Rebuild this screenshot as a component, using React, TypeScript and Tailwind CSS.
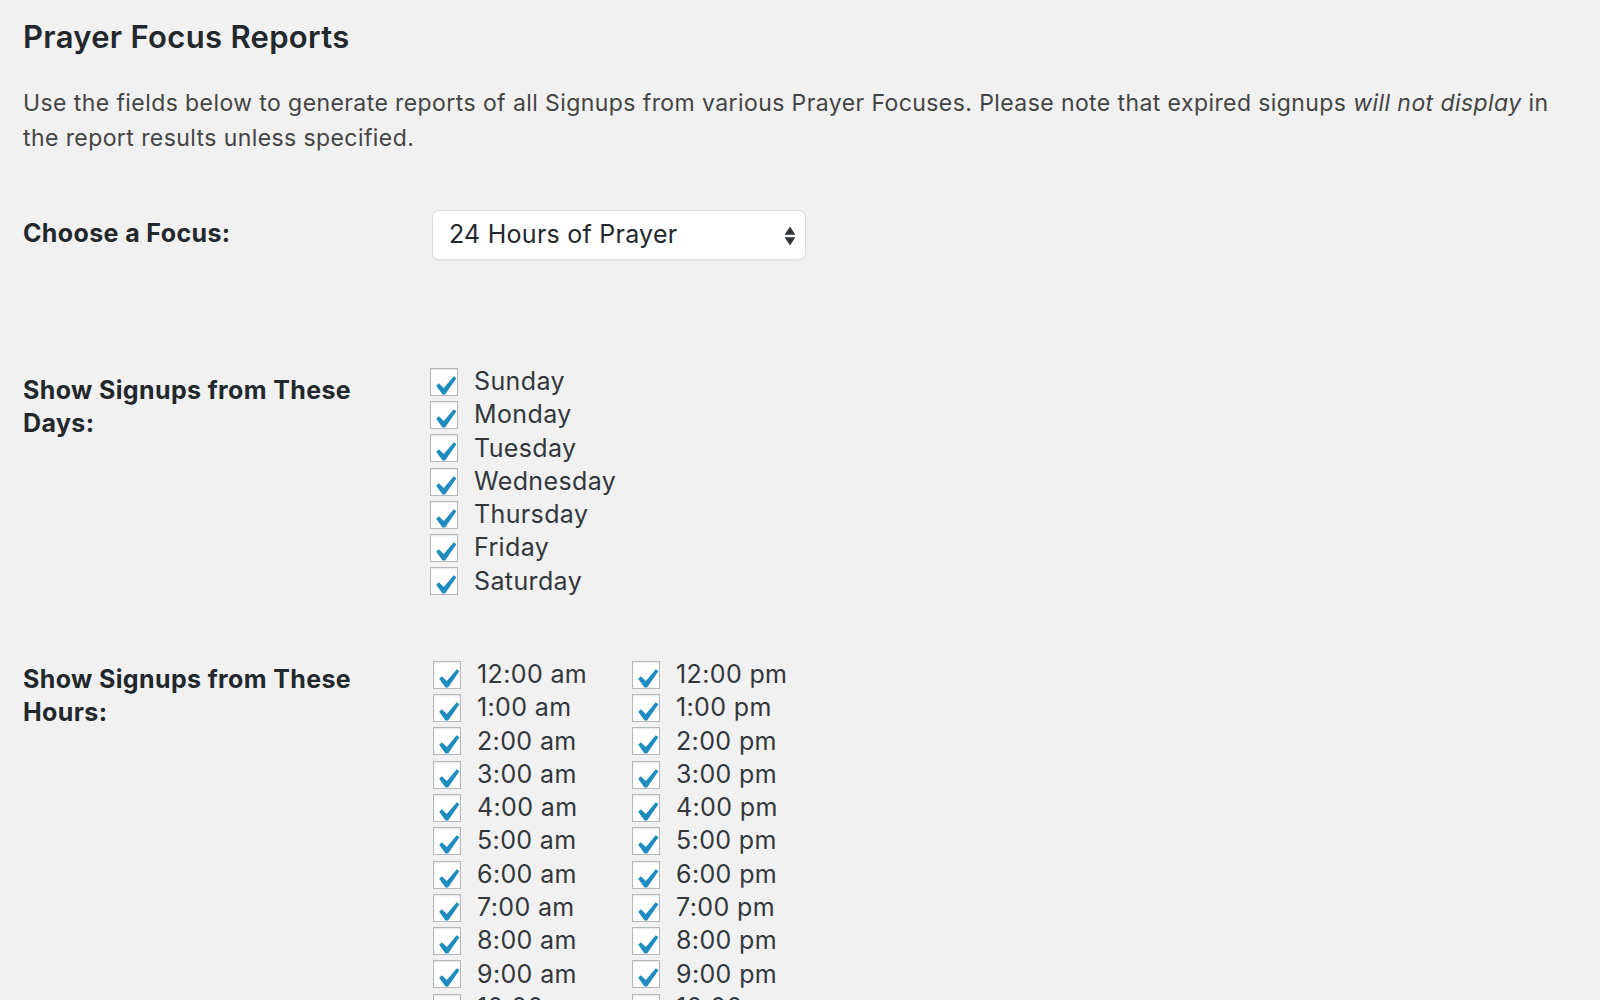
const days = ['Sunday', 'Monday', 'Tuesday', 'Wednesday', 'Thursday', 'Friday', 'Saturday']

const hoursAm = ['12:00 am', '1:00 am', '2:00 am', '3:00 am', '4:00 am', '5:00 am', '6:00 am', '7:00 am', '8:00 am', '9:00 am', '10:00 am', '11:00 am']
const hoursPm = ['12:00 pm', '1:00 pm', '2:00 pm', '3:00 pm', '4:00 pm', '5:00 pm', '6:00 pm', '7:00 pm', '8:00 pm', '9:00 pm', '10:00 pm', '11:00 pm']

function CheckRow({ label }: { label: string }) {
  return (
    <label className="flex h-[33.3px] items-center gap-[16px] text-[25px] tracking-[0.015em] text-[#32373c]">
      <span className="grid h-[28px] w-[28px] shrink-0 place-items-center border-[1.5px] border-[#b4b9be] bg-white shadow-[inset_0_1px_2px_rgba(0,0,0,0.1)]">
        <svg viewBox="3.1 1.1 14.4 14.4" className="h-[28px] w-[28px]">
          <path d="M14.83 4.89l1.34.94-5.81 8.38H9.02L5.78 9.67l1.34-1.25 2.57 2.4z" fill="#1e8cbe" />
        </svg>
      </span>
      <span>{label}</span>
    </label>
  )
}

export default function App() {
  return (
    <div className="min-h-screen bg-[#f1f1f1] px-[23px] pt-[18px] font-['Inter',sans-serif]">
      <h1 className="text-[31px] font-semibold leading-[38px] tracking-[0.01em] text-[#23282d]">Prayer Focus Reports</h1>
      <p className="mt-[30px] pr-[20px] text-[23px] leading-[35px] tracking-[0.018em] text-[#444]">
        Use the fields below to generate reports of all Signups from various Prayer Focuses. Please note that expired
        signups <em>will not display</em> in the report results unless specified.
      </p>

      <div className="mt-[54px] flex items-start">
        <div className="w-[409px] shrink-0 pt-[7px] text-[25px] font-bold leading-[33px] tracking-[0.015em] text-[#23282d]">
          Choose a Focus:
        </div>
        <div className="relative flex h-[50px] w-[374px] items-center rounded-[7px] border border-[#dcdcdc] bg-white pl-[16px] text-[25px] tracking-[0.01em] text-[#23282d] shadow-[0_1px_1px_rgba(0,0,0,0.04)]">
          24 Hours of Prayer
          <svg viewBox="0 0 10 20" className="absolute right-[9px] top-[13px] h-[24px] w-[12px]">
            <path d="M5 2 L9.5 9 H0.5 Z" fill="#32373c" />
            <path d="M5 18 L9.5 11 H0.5 Z" fill="#32373c" />
          </svg>
        </div>
      </div>

      <div className="mt-[105px] flex items-start">
        <div className="w-[407px] shrink-0 pt-[9px] pr-[40px] text-[25px] font-bold leading-[33px] tracking-[0.015em] text-[#23282d]">
          Show Signups from These Days:
        </div>
        <div className="flex flex-col">
          {days.map((d) => (
            <CheckRow key={d} label={d} />
          ))}
        </div>
      </div>

      <div className="mt-[60px] flex items-start pb-[40px]">
        <div className="w-[410px] shrink-0 pt-[5px] pr-[40px] text-[25px] font-bold leading-[33px] tracking-[0.015em] text-[#23282d]">
          Show Signups from These Hours:
        </div>
        <div className="flex">
          <div className="flex w-[199px] flex-col">
            {hoursAm.map((h) => (
              <CheckRow key={h} label={h} />
            ))}
          </div>
          <div className="flex flex-col">
            {hoursPm.map((h) => (
              <CheckRow key={h} label={h} />
            ))}
          </div>
        </div>
      </div>
    </div>
  )
}
